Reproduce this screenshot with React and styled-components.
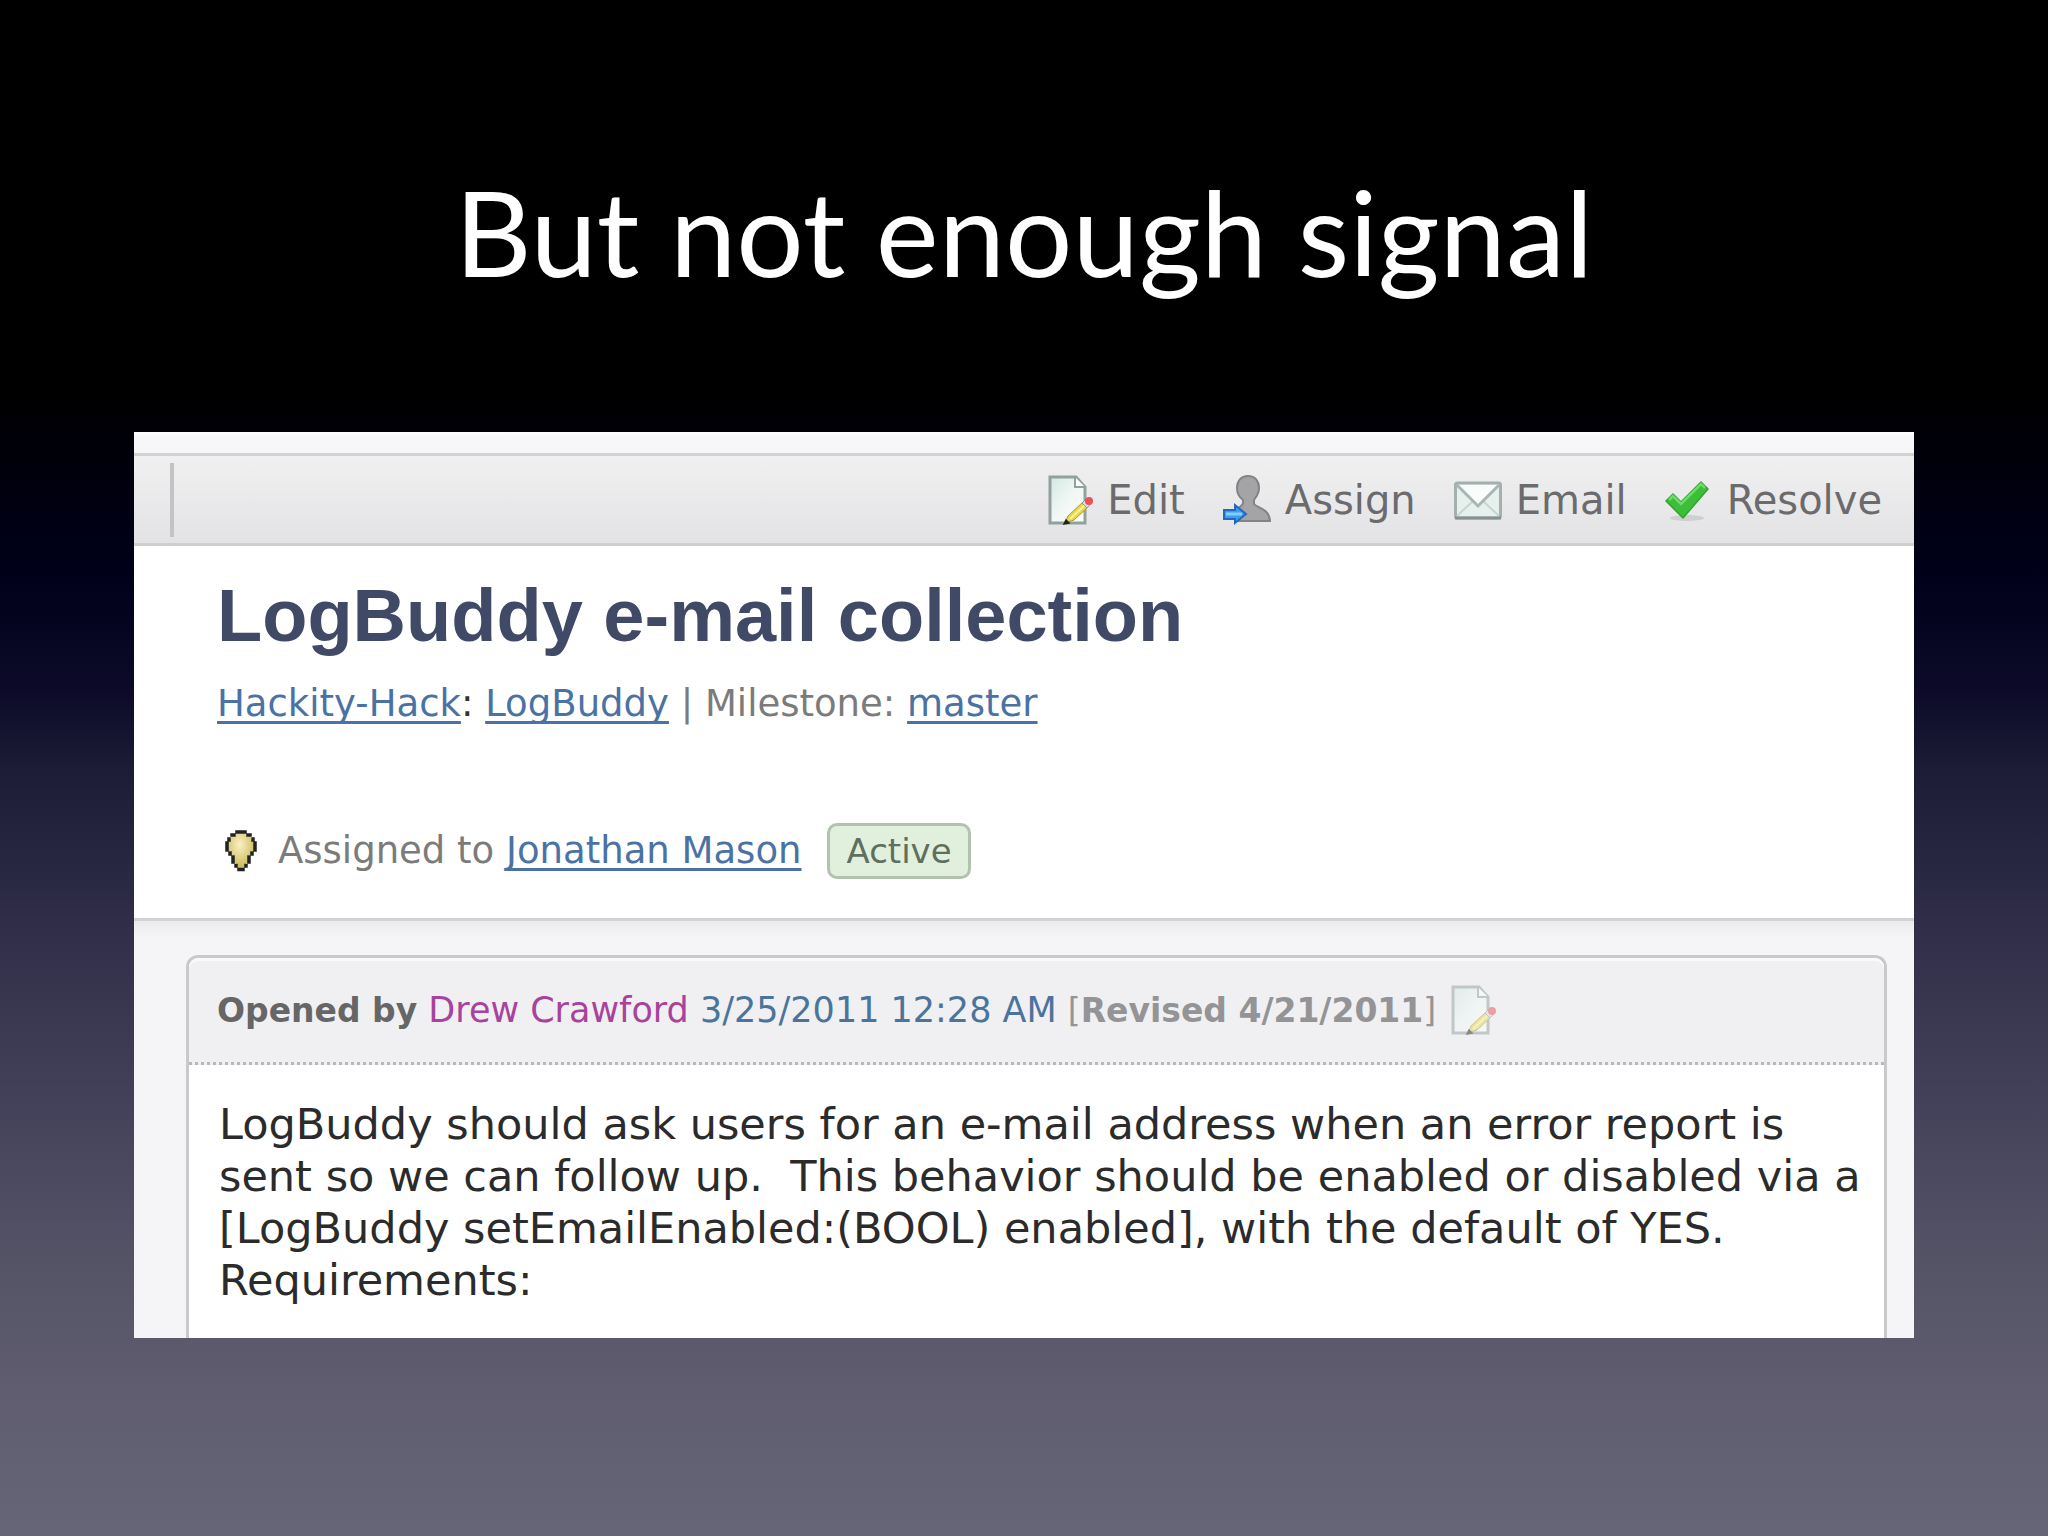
import React from 'react';
import styled, { createGlobalStyle } from 'styled-components';

const GlobalStyle = createGlobalStyle`
    *{
        box-sizing:border-box;
    }
    body{
        margin:0;
        background:#666578;
    }
`;

const Slide = styled.div`
    min-height:100vh;
    padding:0 134px 198px;
    background:linear-gradient(to bottom, #000 0%, #000 25%, #00001a 37%, #0c0a28 45%, #1c1c36 50%, #2f2d47 60%, #424059 71%, #535164 81%, #5f5d6f 91%, #666578 100%);
`;

const Headline = styled.h1`
    margin:0;
    padding:155px 0 125px;
    text-align:center;
    color:white;
    font:400 119px/152px Lato, 'Gill Sans', sans-serif;
`;

const Panel = styled.main`
    background:white;
    overflow:hidden;
    font-family:'DejaVu Sans', Verdana, sans-serif;
`;

const TopStrip = styled.div`
    height:24px;
    background:linear-gradient(to bottom, #fff, #f8f8fb 20%, #f6f6f9);
    border-bottom:3px solid #d3d3d5;
`;

const Toolbar = styled.nav`
    display:flex;
    align-items:center;
    justify-content:space-between;
    height:90px;
    padding:0 32px 0 36px;
    background:linear-gradient(to bottom, #f0f0f1, #e3e3e5);
    border-bottom:3px solid #cfcfd1;
`;

const Divider = styled.div`
    width:4px;
    height:74px;
    background:#c3c3c5;
`;

const Actions = styled.div`
    display:flex;
    gap:38px;
`;

const ActionButton = styled.button`
    display:flex;
    align-items:center;
    gap:14px;
    padding:0;
    border:0;
    background:none;
    color:#6b6b6d;
    font:400 40px/48px 'DejaVu Sans', Verdana, sans-serif;
    cursor:pointer;
`;

const Icon = styled.svg`
    display:block;
    flex:none;
    width:${props => props.$width || 48}px;
    height:52px;
    opacity:${props => props.$faded ? 0.5 : 1};
`;

const Summary = styled.header`
    padding:28px 83px 39px;
    border-bottom:3px solid #d3d3d6;
`;

const CaseTitle = styled.h2`
    margin:0 0 22px;
    color:#404966;
    font:700 74px/84px 'Liberation Sans', Arial, sans-serif;
`;

const MetaLine = styled.div`
    color:#7b7b7b;
    font-size:37px;
    line-height:48px;
`;

const MetaLink = styled.a`
    color:#4a72a4;
    text-decoration:underline;
    text-decoration-thickness:3px;
    text-underline-offset:5px;
    text-decoration-skip-ink:none;
`;

const Colon = styled.span`
    color:#333;
`;

const AssigneeRow = styled.div`
    display:flex;
    align-items:center;
    margin-top:95px;
`;

const Status = styled.span`
    margin-left:26px;
    padding:4px 16px;
    border:3px solid #b3c2b0;
    border-radius:10px;
    background:#e1f0dd;
    color:#5f6f5e;
    font-size:34px;
    line-height:42px;
`;

const Events = styled.section`
    padding:34px 27px 0 52px;
    background:linear-gradient(to bottom, #ebebee, #f5f5f8 16px);
`;

const EventCard = styled.article`
    border:3px solid #c9c9cc;
    border-bottom:0;
    border-radius:12px 12px 0 0;
    background:white;
`;

const EventHeader = styled.div`
    display:flex;
    align-items:center;
    gap:14px;
    height:107px;
    padding:0 28px;
    border-bottom:3px dotted #b8b8bb;
    border-radius:9px 9px 0 0;
    box-shadow:inset 0 3px 0 #f9f9fa;
    background:#f0f0f2;
    color:#666;
    font-size:35px;
    line-height:44px;
`;

const Verb = styled.b`
    font-size:33px;
`;

const PersonLink = styled.a`
    color:#a8429c;
    text-decoration:none;
`;

const DateLink = styled.a`
    color:#4b749c;
    text-decoration:none;
`;

const Revised = styled.span`
    color:#949496;
    font-size:33px;
`;

const IconButton = styled.button`
    padding:0;
    border:0;
    background:none;
    cursor:pointer;
`;

const EventText = styled.p`
    margin:0;
    padding:33px 8px 32px 30px;
    color:#2b2b2b;
    font-size:43px;
    line-height:52px;
    white-space:pre-wrap;
`;

const EditIcon = ({ faded }) => (
    <Icon viewBox="0 0 46 52" $width={46} $faded={faded} aria-hidden="true">
        <defs>
            <linearGradient id="paper" x1="0" y1="0" x2="1" y2="1">
                <stop offset="0" stopColor="#d3e8e2" />
                <stop offset="0.5" stopColor="#f0f7f5" />
                <stop offset="1" stopColor="#fff" />
            </linearGradient>
        </defs>
        <path d="M3 3H29L38 13V49H3Z" fill="url(#paper)" stroke="#91a19d" strokeWidth="3" />
        <path d="M28 3V13H38" fill="#fff" stroke="#91a19d" strokeWidth="2" />
        <path d="M18 49L21 42L36 28L41 33L27 46Z" fill="#e8d94b" stroke="#a8973a" strokeWidth="1" />
        <path d="M23 45L38 31" stroke="#faf19c" strokeWidth="2" />
        <path d="M35 29L38 26L43 31L40 34Z" fill="#d9dadd" stroke="#999" strokeWidth="1" />
        <circle cx="42" cy="27" r="4" fill="#e8505a" />
        <path d="M17 50L19 46L22 49Z" fill="#222" stroke="#222" strokeWidth="1.5" />
    </Icon>
);

const AssignIcon = () => (
    <Icon viewBox="0 0 48 52" aria-hidden="true">
        <path d="M25 2C32 2 36 7 36 14C36 20 33 23 31 26V30C34 34 46 34 47 47H14V35C17 33 20 31 20 29V26C16 23 14 19 14 14C14 7 18 2 25 2Z" fill="#a4a4a6" stroke="#838385" strokeWidth="2" />
        <path d="M1 36H12V31L23 40L12 49V45H1Z" fill="#3f9df0" stroke="#2468bd" strokeWidth="2" />
        <path d="M3 40H19" stroke="#7fd0ff" strokeWidth="3" />
    </Icon>
);

const EmailIcon = () => (
    <Icon viewBox="0 0 48 52" aria-hidden="true">
        <rect x="1.5" y="9" width="45" height="35" rx="2" fill="#e6f1ee" stroke="#a3b0ad" strokeWidth="3" />
        <path d="M3 42L19 27M45 42L29 27" stroke="#c5d6d2" strokeWidth="2" />
        <path d="M3 11L24 32L45 11" fill="#f8fcfb" stroke="#a9b6b3" strokeWidth="3" />
        <path d="M1 44H47" stroke="#85928f" strokeWidth="3" />
    </Icon>
);

const ResolveIcon = () => (
    <Icon viewBox="0 0 48 52" aria-hidden="true">
        <ellipse cx="22" cy="44" rx="17" ry="3" fill="#cfcfd1" />
        <path d="M1 27L8 20L16 28L36 8L43 15L18 44Z" fill="#3cbe3a" stroke="#2fa52e" strokeWidth="1.5" strokeLinejoin="round" />
        <path d="M4 26L8 22L16 30L36 10L40 14" fill="none" stroke="#6edb66" strokeWidth="2.5" />
    </Icon>
);

const BulbSvg = styled.svg`
    display:block;
    width:48px;
    height:44px;
    margin-right:13px;
`;

const BulbIcon = () => (
    <BulbSvg viewBox="0 0 48 44" aria-hidden="true">
        <defs>
            <radialGradient id="glow" cx="0.45" cy="0.35" r="0.6">
                <stop offset="0" stopColor="#fbf0c4" />
                <stop offset="1" stopColor="#cdbd62" />
            </radialGradient>
        </defs>
        <path d="M19 3H29V6H34V11H37V22H34V26H31V34H29V39H19V34H17V26H14V22H11V11H14V6H19Z" fill="url(#glow)" />
        <path d="M20 3H28M31 6H33M15 6H17M36 10V11M12 10V11M38 14V21M10 14V21M35 24V25M13 24V25M32 28V33M16 28V33M29 36.5V37M19 36.5V37M22 40.5H26" fill="none" stroke="#222" strokeWidth="3.5" strokeLinecap="square" />
    </BulbSvg>
);

const actions = [
    { label: 'Edit', Glyph: EditIcon },
    { label: 'Assign', Glyph: AssignIcon },
    { label: 'Email', Glyph: EmailIcon },
    { label: 'Resolve', Glyph: ResolveIcon },
];

const App = () => (
    <Slide>
        <GlobalStyle />
        <Headline>But not enough signal</Headline>
        <Panel>
            <TopStrip />
            <Toolbar>
                <Divider />
                <Actions>
                    {actions.map(({ label, Glyph }) => (
                        <ActionButton key={label} type="button">
                            <Glyph />
                            {label}
                        </ActionButton>
                    ))}
                </Actions>
            </Toolbar>
            <Summary>
                <CaseTitle>LogBuddy e-mail collection</CaseTitle>
                <MetaLine>
                    <MetaLink href="#project">Hackity-Hack</MetaLink><Colon>: </Colon>
                    <MetaLink href="#area">LogBuddy</MetaLink> | Milestone: <MetaLink href="#milestone">master</MetaLink>
                </MetaLine>
                <AssigneeRow>
                    <BulbIcon />
                    <MetaLine>Assigned to <MetaLink href="#assignee">Jonathan Mason</MetaLink></MetaLine>
                    <Status>Active</Status>
                </AssigneeRow>
            </Summary>
            <Events>
                <EventCard>
                    <EventHeader>
                        <span>
                            <Verb>Opened by</Verb> <PersonLink href="#person">Drew Crawford</PersonLink> <DateLink href="#event">3/25/2011 12:28 AM</DateLink> <Revised>[<b>Revised 4/21/2011</b>]</Revised>
                        </span>
                        <IconButton type="button" aria-label="Edit revision">
                            <EditIcon faded />
                        </IconButton>
                    </EventHeader>
                    <EventText>
                        {'LogBuddy should ask users for an e-mail address when an error report is sent so we can follow up.  This behavior should be enabled or disabled via a [LogBuddy setEmailEnabled:(BOOL) enabled], with the default of YES.\nRequirements:'}
                    </EventText>
                </EventCard>
            </Events>
        </Panel>
    </Slide>
);

export default App;
